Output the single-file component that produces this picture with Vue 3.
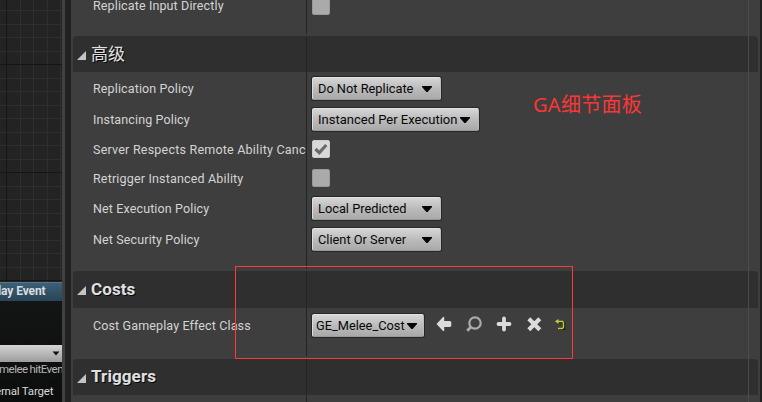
<script setup>
const gridX = [20.5, 33.5, 47.5, 60.5]
const gridY = Array.from({ length: 22 }, (_, i) => Math.round(10 + i * 13.5) + 0.5)
const majorY = [64.5, 172.5, 280.5]
const sections = [
  { cls: 'top', rows: [{ label: 'Replicate Input Directly', kind: 'check', size: 'short' }] },
  {
    cls: 'advanced', title: '高级', cjk: true,
    rows: [
      { label: 'Replication Policy', kind: 'select', value: 'Do Not Replicate' },
      { label: 'Instancing Policy', kind: 'select', value: 'Instanced Per Execution', width: 'wide' },
      { label: 'Server Respects Remote Ability Canc', kind: 'check', checked: true, size: 'h28' },
      { label: 'Retrigger Instanced Ability', kind: 'check', size: 'h30' },
      { label: 'Net Execution Policy', kind: 'select', value: 'Local Predicted' },
      { label: 'Net Security Policy', kind: 'select', value: 'Client Or Server' },
    ],
  },
  {
    cls: 'costs', title: 'Costs',
    rows: [{ label: 'Cost Gameplay Effect Class', kind: 'select', value: 'GE_Melee_Cost', width: 'asset', tools: true }],
  },
  { cls: 'triggers', title: 'Triggers', rows: [] },
]
</script>

<template>
  <div class="editor">
    <div class="graph">
      <svg class="grid" width="62" height="402">
        <g stroke="#2e2e2e">
          <line v-for="x in gridX" :key="x" :x1="x" :x2="x" y1="0" y2="402" />
          <line v-for="y in gridY" :key="y" x1="0" x2="62" :y1="y" :y2="y" />
        </g>
        <g stroke="#151515">
          <line x1="6.5" x2="6.5" y1="0" y2="402" />
          <line v-for="y in majorY" :key="y" x1="0" x2="62" :y1="y" :y2="y" />
        </g>
      </svg>
      <div class="node">
        <div class="node-title"><span>lay Event</span></div>
        <div class="node-gap"></div>
        <div class="node-select">
          <svg width="8" height="5" viewBox="0 0 8 5"><path d="M0.5 0.5H7.5L4 4.5Z" fill="#111" /></svg>
        </div>
        <div class="pin dim">melee hitEvent</div>
        <div class="pin target">ernal Target</div>
      </div>
    </div>
    <div class="splitter"></div>
    <div class="details">
      <section v-for="s in sections" :key="s.cls" :class="['section', s.cls]">
        <header v-if="s.title">
          <svg width="9" height="9" viewBox="0 0 9 9"><path d="M9 0V9H0Z" fill="#c4c4c4" /></svg>
          <h2 :class="{ cjk: s.cjk }">{{ s.title }}</h2>
        </header>
        <div class="rows">
          <div v-for="r in s.rows" :key="r.label" :class="['row', r.size]">
            <div class="label"><span>{{ r.label }}</span></div>
            <div class="value">
              <div v-if="r.kind === 'check'" :class="['check', { on: r.checked }]">
                <svg v-if="r.checked" width="14" height="12" viewBox="0 0 14 12"><path d="M1.5 6L5.3 9.7L12.3 2" fill="none" stroke="#6b6b6b" stroke-width="3.2" /></svg>
              </div>
              <div v-else :class="['select', r.width]">
                <span>{{ r.value }}</span>
                <svg width="10" height="6" viewBox="0 0 10 6"><path d="M0 0H10V1L5.6 6H4.4L0 1Z" fill="#050505" /></svg>
              </div>
              <div v-if="r.tools" class="tools">
                <svg width="16" height="16" viewBox="0 0 16 16"><path d="M0.5 8L7.3 0.8L8.2 1.2V5H14L15.3 6V10L14 11H8.2V14.8L7.3 15.2Z" fill="#dcdcdc" /></svg>
                <svg width="16" height="16" viewBox="0 0 16 16"><circle cx="9" cy="7" r="5.7" fill="none" stroke="#aaa" stroke-width="2.2" /><path d="M5 11L1.2 14.8" stroke="#aaa" stroke-width="2.9" /></svg>
                <svg width="16" height="16" viewBox="0 0 16 16"><path d="M8 2.5V13.5M2.5 8H13.5" stroke="#dcdcdc" stroke-width="3.8" stroke-linecap="round" /></svg>
                <svg width="16" height="16" viewBox="0 0 16 16"><path d="M4.3 4.3L12.3 12.3M12.3 4.3L4.3 12.3" stroke="#dcdcdc" stroke-width="4.2" stroke-linecap="square" /></svg>
                <svg class="reset" width="11" height="11" viewBox="0 0 11 11">
                  <path d="M3 3.5H9.5V10.5H4" fill="none" stroke="#151515" stroke-width="1.3" />
                  <path d="M2 2.5H7.5L8.5 3.5V8.5L7.5 9.5H3" fill="none" stroke="#c5cb35" stroke-width="1.4" />
                  <path d="M0 2.2L3.5 0V5Z" fill="#c5cb35" />
                </svg>
              </div>
            </div>
          </div>
        </div>
      </section>
      <i class="divider"></i>
      <i class="scroll-line"></i>
    </div>
    <div class="edge"></div>
    <div class="note">GA细节面板</div>
    <div class="highlight"></div>
  </div>
</template>

<style>
body { margin: 0; background: #222; }
</style>

<style scoped>
.editor { position: relative; display: flex; width: 762px; height: 402px; overflow: hidden; font: 13px/16px Roboto, "Noto Sans CJK SC", sans-serif; color: #d4d4d4; }
.graph { position: relative; flex: 0 0 62px; display: flex; flex-direction: column; justify-content: flex-end; overflow: hidden; background: #232323; }
.grid { position: absolute; inset: 0; }
.node { position: relative; height: 120px; background: linear-gradient(#131615ee, #0b0d0cf5); white-space: nowrap; }
.node-title { box-sizing: border-box; height: 19px; border-top: 1px solid #55758b; background: linear-gradient(#3c6078, #294556); font-size: 12px; line-height: 17px; font-weight: 700; color: #d8dde0; }
.node-title span { display: block; margin-left: -2px; letter-spacing: -0.1px; }
.node-gap { height: 44px; }
.node-select { box-sizing: border-box; display: flex; align-items: center; justify-content: flex-end; height: 17px; padding-right: 2px; background: linear-gradient(#d5d5d5, #9c9c9c); }
.pin { font-size: 11px; line-height: 14px; }
.dim { margin: 0 0 0 -1px; letter-spacing: -0.52px; word-spacing: -0.5px; font-size: 11.5px; color: #b5b5b5; }
.target { margin: 8px 0 0 -5px; letter-spacing: -0.2px; font-size: 11.5px; color: #d8d8d8; }
.splitter { box-sizing: border-box; flex: 0 0 9px; border-left: 3px solid #414141; background: #222; }
.details { position: relative; flex: 1; min-width: 0; padding: 0 2px; background: #3e3e3e; }
.edge { flex: 0 0 2px; background: #222; }
header { display: flex; align-items: center; gap: 5px; height: 36px; padding-left: 4px; border-radius: 4px 4px 0 0; background: #2f2f2f; }
header svg { margin-top: 2px; }
h2 { margin: -2px 0 0; font-size: 17px; line-height: 22px; font-weight: 700; color: #e0e0e0; letter-spacing: 0.1px; text-shadow: 1px 1px 0 #080808; }
.cjk { margin-top: 0; font-weight: 400; }
.top { height: 36px; }
.advanced { height: 235px; }
.costs { height: 88px; }
.costs header { height: 37px; }
.advanced .rows { padding-top: 1px; }
.costs .rows { padding-top: 2px; }
.row { display: flex; align-items: center; height: 31px; }
.short { height: 12px; }
.h28 { height: 28px; }
.h30 { height: 30px; }
.label { flex: 0 0 213px; padding-left: 20px; white-space: nowrap; font-size: 12.5px; letter-spacing: 0.13px; }
.h28 .label { padding-top: 1px; letter-spacing: 0.22px; }
.h30 .label { padding-top: 1px; letter-spacing: 0.17px; }
.value { display: flex; align-items: center; padding-left: 6px; }
.check { box-sizing: border-box; display: flex; align-items: center; justify-content: center; width: 18px; height: 18px; border: 1px solid #999; border-radius: 2px; background: #aaa; }
.on { border-color: #ccc; background: #d8d8d8; }
.select { box-sizing: border-box; display: flex; align-items: center; justify-content: space-between; width: 129px; height: 23px; padding: 0 8px 0 5px; border: 1px solid #e2e2e2; border-color: #e2e2e2 #bbb #999 #ddd; border-radius: 2px; box-shadow: 0 0 0 1px #272727; background: linear-gradient(#d5d5d5, #bbb 50%, #a9a9a9); color: #080808; font-size: 12.8px; white-space: nowrap; }
.wide { width: 167px; font-size: 13px; }
.asset { width: 112px; padding: 0 6px 0 3px; }
.tools { display: flex; align-items: center; gap: 14px; margin: -3px 0 0 12px; }
.reset { margin-left: -1px; }
.divider { position: absolute; left: 235px; top: 0; width: 1px; height: 402px; background: linear-gradient(#242424 34px, transparent 34px 36px, #242424 36px 269px, transparent 269px 271px, #242424 271px 356px, transparent 356px 359px, #242424 359px); }
.scroll-line { position: absolute; left: 677px; top: 0; width: 1px; height: 402px; background: #4b4b4b; }
.note { position: absolute; left: 533px; top: 92px; font: 20px/26px "Noto Sans", "Noto Sans CJK SC", sans-serif; letter-spacing: 0.3px; color: #fa3737; white-space: nowrap; }
.highlight { position: absolute; box-sizing: border-box; left: 235px; top: 266px; width: 338px; height: 93px; border: 1px solid #ff3838; }
</style>
